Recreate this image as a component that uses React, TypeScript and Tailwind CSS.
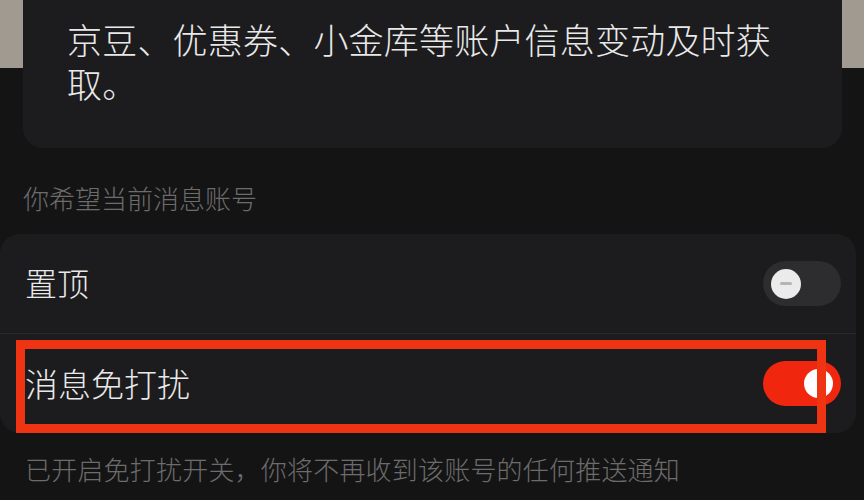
import React from "react";

function Toggle({ on }: { on: boolean }) {
  if (on) {
    return (
      <div className="flex h-[45px] w-[78px] shrink-0 items-center justify-end rounded-full bg-[#f0260f] pr-[8px]">
        <div className="h-[29px] w-[29px] rounded-full bg-white" />
      </div>
    );
  }
  return (
    <div className="flex h-[45px] w-[78px] shrink-0 items-center rounded-full bg-[#2d2d2f] pl-[8px]">
      <div className="flex h-[30px] w-[30px] items-center justify-center rounded-full bg-[#ebebeb]">
        <div className="h-[3px] w-[12px] rounded-full bg-[#b4b4b4]" />
      </div>
    </div>
  );
}

export default function App() {
  return (
    <div
      className="relative h-[500px] w-[864px] overflow-hidden bg-[linear-gradient(to_bottom,#a09a91_68px,#151415_68px)] font-light text-[#e9e9e9]"
      style={{ fontFamily: '"Noto Sans CJK SC", "Noto Sans", sans-serif' }}
    >
      {/* info card */}
      <div className="ml-[23px] mt-[-21px] w-[819px] rounded-[20px] bg-[#1c1c1e] px-[44px] pb-[43px] pt-[38px] text-[35px] leading-[44px] tracking-[0.2px]">
        京豆、优惠券、小金库等账户信息变动及时获取。
      </div>

      <div className="mt-[32px] px-[23px] text-[26px] leading-[36px] text-[#6c6c6c]">
        你希望当前消息账号
      </div>

      {/* settings card */}
      <div className="mt-[18px] w-[856px] rounded-[20px] bg-[#1c1c1e]">
        <div className="flex h-[99px] items-center justify-between pl-[25px] pr-[15px]">
          <span className="mt-[-4px] text-[32px] leading-none">置顶</span>
          <Toggle on={false} />
        </div>
        <div className="h-px bg-[#29292b]" />
        <div className="flex h-[99px] items-center justify-between pl-[25px] pr-[15px]">
          <span className="text-[33px] leading-none">消息免打扰</span>
          <Toggle on={true} />
        </div>
      </div>

      <div className="mt-[18px] px-[25px] text-[26px] leading-[36px] tracking-[0.2px] text-[#6c6c6c]">
        已开启免打扰开关，你将不再收到该账号的任何推送通知
      </div>

      {/* annotation box */}
      <div className="absolute left-[16px] top-[340px] h-[93px] w-[810px] border-[9px] border-[#ef3413]" />
    </div>
  );
}
